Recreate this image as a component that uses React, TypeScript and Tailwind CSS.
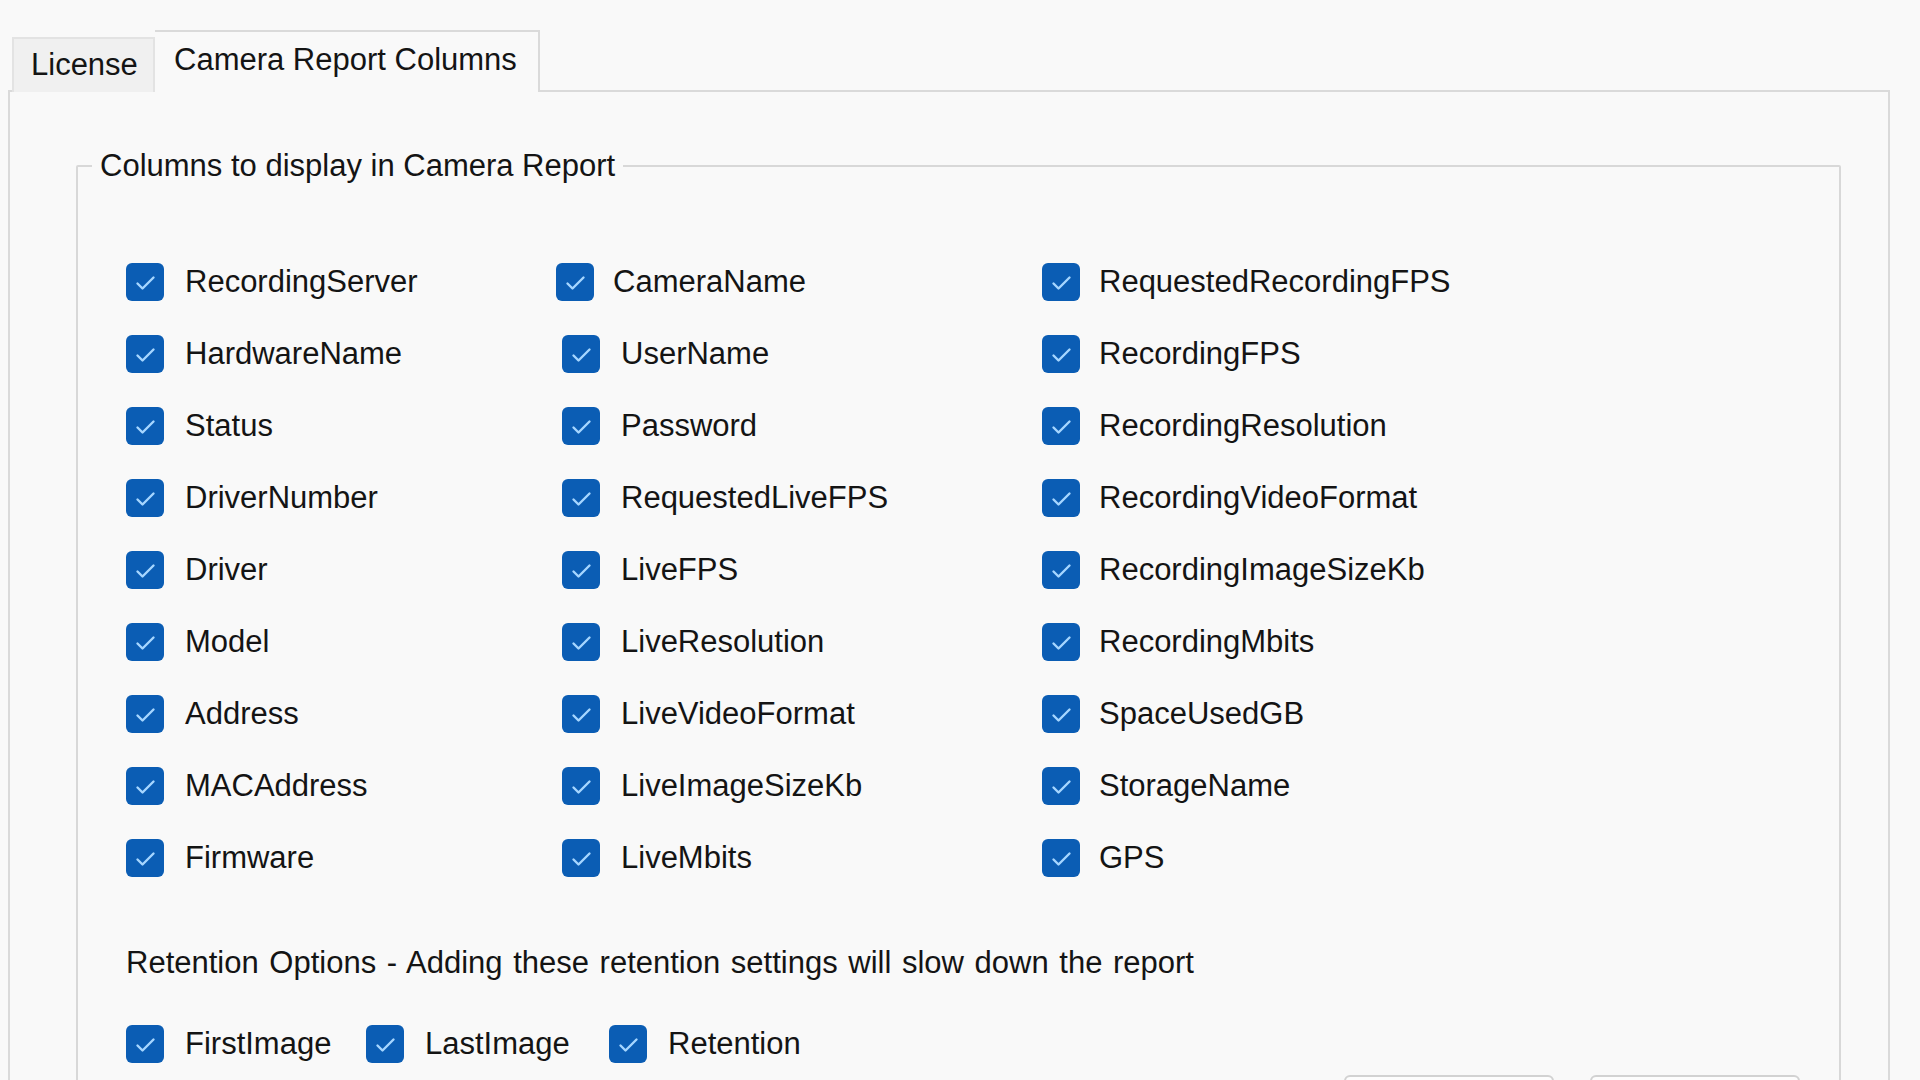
import React from 'react';

const columns: string[][] = [
  ['RecordingServer', 'HardwareName', 'Status', 'DriverNumber', 'Driver', 'Model', 'Address', 'MACAddress', 'Firmware'],
  ['CameraName', 'UserName', 'Password', 'RequestedLiveFPS', 'LiveFPS', 'LiveResolution', 'LiveVideoFormat', 'LiveImageSizeKb', 'LiveMbits'],
  ['RequestedRecordingFPS', 'RecordingFPS', 'RecordingResolution', 'RecordingVideoFormat', 'RecordingImageSizeKb', 'RecordingMbits', 'SpaceUsedGB', 'StorageName', 'GPS'],
];

const colWidths = ['w-[436px]', 'w-[480px]', 'flex-1'];

const CheckBox: React.FC = () => (
  <div className="w-[38px] h-[38px] shrink-0 rounded-[6px] bg-[#0b5db4]">
    <svg width="38" height="38" viewBox="0 0 38 38" fill="none">
      <path d="M11.5 20.5 L16.5 25.5 L27.5 14.5" stroke="#a6d6ff" strokeWidth="2.4" strokeLinecap="round" strokeLinejoin="round" />
    </svg>
  </div>
);

const Option: React.FC<{ label: string; className?: string }> = ({ label, className = '' }) => (
  <div className={`flex items-center gap-[21px] ${className}`}>
    <CheckBox />
    <span className="leading-[36px] whitespace-nowrap">{label}</span>
  </div>
);

export default function App() {
  return (
    <div
      className="w-[1920px] h-[1080px] overflow-hidden bg-[#f9f9f9] text-[#141414] text-[31px] pt-[30px] pl-[8px]"
      style={{ fontFamily: '"Liberation Sans", Arial, sans-serif' }}
    >
      {/* tab headers */}
      <div className="flex items-end ml-[4px] relative z-10 -mb-[2px]">
        <div className="h-[55px] w-[143px] flex items-center pl-[17px] bg-[#f0f0f0] border-2 border-b-0 border-[#e3e3e3]">
          License
        </div>
        <div className="h-[62px] w-[385px] flex items-center pl-[19px] pb-[4px] bg-[#f9f9f9] border-2 border-l-0 border-b-0 border-[#dadada]">
          Camera Report Columns
        </div>
      </div>

      {/* tab page */}
      <div className="w-[1882px] h-[1100px] border-2 border-[#dadada]">
        <fieldset className="ml-[66px] mt-[56px] w-[1765px] h-[1000px] border-2 border-[#d8d8d8] rounded-[2px]">
          <legend className="ml-[14px] px-[8px] leading-[36px]">Columns to display in Camera Report</legend>

          <div className="flex pl-[48px] mt-[62px]">
            {columns.map((col, ci) => (
              <div key={ci} className={`flex flex-col ${colWidths[ci]}`}>
                {col.map((label, ri) => (
                  <div key={label} className="h-[72px] flex items-center">
                    <Option
                      label={label}
                      className={
                        ci === 1 && ri === 0
                          ? '-ml-[6px] !gap-[19px]'
                          : ci === 2
                          ? '!gap-[19px]'
                          : ''
                      }
                    />
                  </div>
                ))}
              </div>
            ))}
          </div>

          <div className="pl-[48px] mt-[51px] leading-[36px] [word-spacing:2px]">
            Retention Options - Adding these retention settings will slow down the report
          </div>

          <div className="flex items-center pl-[48px] mt-[33px] h-[60px]">
            <Option label="FirstImage" className="w-[240px]" />
            <Option label="LastImage" className="w-[243px]" />
            <Option label="Retention" />
          </div>

          <div className="flex justify-end gap-[36px] pr-[39px] mt-[1px]">
            <div className="w-[210px] h-[60px] rounded-[6px] bg-[#fdfdfd] border-2 border-[#d2d2d2]" />
            <div className="w-[210px] h-[60px] rounded-[6px] bg-[#fdfdfd] border-2 border-[#d2d2d2]" />
          </div>
        </fieldset>
      </div>
    </div>
  );
}
